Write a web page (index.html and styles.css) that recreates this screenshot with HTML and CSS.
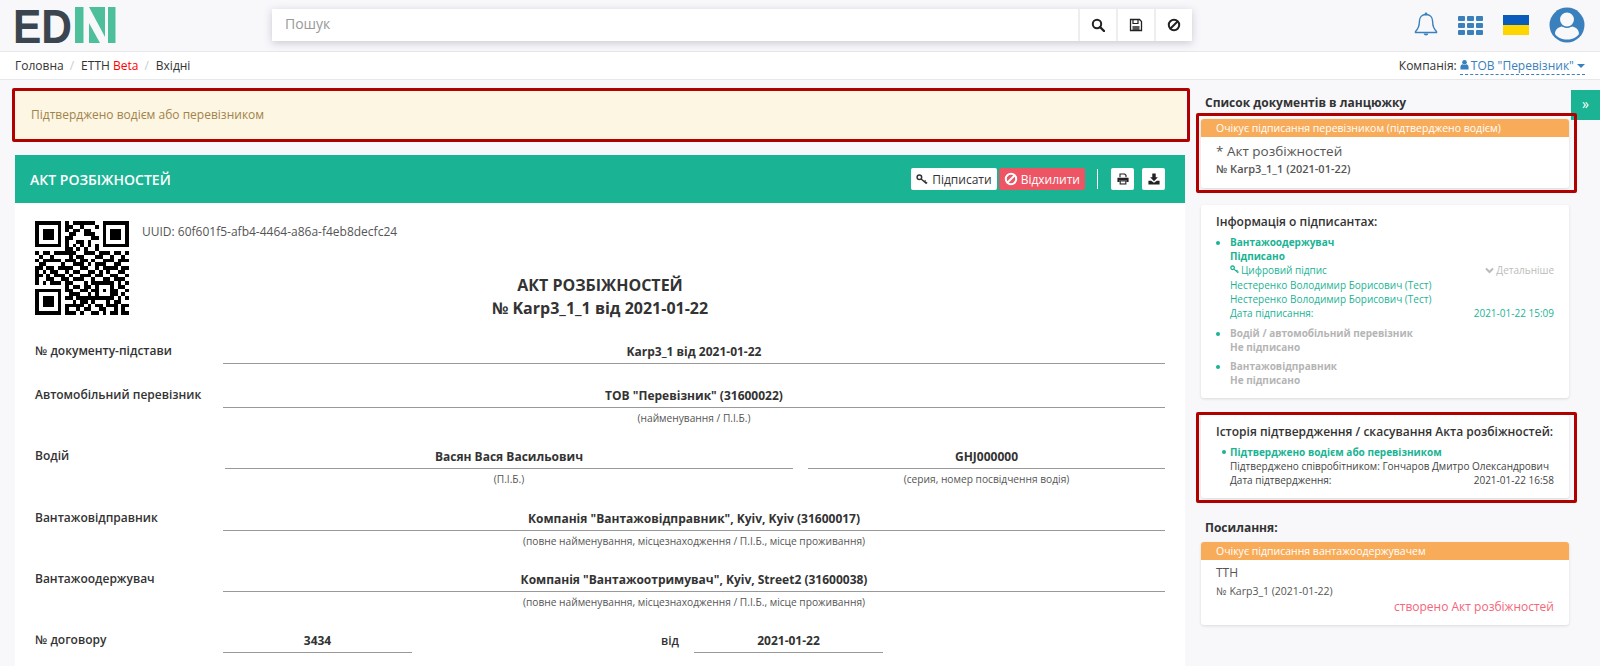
FILE: index.html
```html
<!DOCTYPE html>
<html lang="uk">
<head>
  <meta charset="UTF-8">
  <meta name="viewport" content="width=device-width, initial-scale=1.0">
  <title>EDIN - Акт розбіжностей</title>
  <link rel="stylesheet" href="styles.css">
</head>
<body>
  <!-- Top bar -->
  <header class="topbar">
    <div class="logo">
      <svg class="logo-svg" width="100" height="36" viewBox="0 0 100 36">
        <text class="logo-text" x="-3" y="36" textLength="59" lengthAdjust="spacingAndGlyphs">ED</text>
        <rect x="59" y="0" width="8.500" height="36" fill="#4dbf9b"/>
        <polygon points="73,0 89,0 89,30" fill="#4dbf9b"/>
        <polygon points="73,16 84,36 73,36" fill="#4dbf9b"/>
        <rect x="92" y="0" width="7.500" height="36" fill="#4dbf9b"/>
      </svg>
    </div>
    <div class="search">
      <div class="search-input">Пошук</div>
      <div class="search-btn">
        <svg width="14" height="14" viewBox="0 0 14 14"><circle cx="6" cy="6" r="4.200" fill="none" stroke="#222" stroke-width="2"/><path d="M9 9l4 4" stroke="#222" stroke-width="2.400" stroke-linecap="round"/></svg>
      </div>
      <div class="search-btn">
        <svg width="14" height="14" viewBox="0 0 14 14"><path d="M1.500 1.500h9l2 2v9h-11z" fill="none" stroke="#222" stroke-width="1.300"/><path d="M4 2v3.500h5V2" fill="none" stroke="#222" stroke-width="1.200"/><rect x="3.500" y="8" width="7" height="4.500" fill="#222" opacity="0.75"/></svg>
      </div>
      <div class="search-btn">
        <svg width="14" height="14" viewBox="0 0 14 14"><circle cx="7" cy="7" r="5.200" fill="none" stroke="#222" stroke-width="2"/><path d="M3.500 10.500l7-7" stroke="#222" stroke-width="2"/></svg>
      </div>
    </div>
    <div class="top-icons">
      <svg width="24" height="26" viewBox="0 0 24 26"><path d="M12 2.500c-4.200 0-6.600 3-6.600 6.800 0 5-1.100 7.600-3.900 10.200v1h21v-1c-2.800-2.600-3.900-5.200-3.900-10.200 0-3.800-2.400-6.800-6.600-6.800z" fill="none" stroke="#3a80bd" stroke-width="1.400"/><circle cx="12" cy="2" r="1.400" fill="#3a80bd"/><path d="M9.500 21.500a2.600 2.600 0 0 0 5 0z" fill="#3a80bd"/></svg>
      <div class="apps">
        <i></i><i></i><i></i><i></i><i></i><i></i><i></i><i></i><i></i>
      </div>
      <div class="flag"></div>
      <svg width="36" height="36" viewBox="0 0 36 36"><circle cx="18" cy="18" r="17.500" fill="#3a80bd"/><path d="M6 27c0-5 4-7 7-7.500 3 1.500 7 1.500 10 0 3 .5 7 2.500 7 7.500-3 4-7 5.500-12 5.500S9 31 6 27z" fill="#f8f8fb"/><circle cx="18" cy="12.500" r="7.700" fill="#f8f8fb" stroke="#3a80bd" stroke-width="1.500"/></svg>
    </div>
  </header>

  <!-- Breadcrumbs -->
  <nav class="crumbs">
    <div class="crumbs-list">
      <span>Головна</span><span class="sep">/</span><span>ЕТТН <b class="beta">Beta</b></span><span class="sep">/</span><span>Вхідні</span>
    </div>
    <div class="company">Компанія: <span class="company-link"><svg class="company-icon" width="9" height="11" viewBox="0 0 10 11"><circle cx="5" cy="3" r="2.600" fill="#3a80bd"/><path d="M0.500 11V8c0-1.600 1.500-2.700 2.500-2.700 1.200.8 2.800.8 4 0 1 0 2.500 1.100 2.500 2.700v3z" fill="#3a80bd"/></svg>ТОВ "Перевізник" <i class="caret"></i></span></div>
  </nav>

  <div class="side-toggle">»</div>

  <div class="content">
    <main class="main-col">
      <div class="alert marked">Підтверджено водієм або перевізником</div>

      <section class="panel">
        <div class="panel-head">
          <h1>АКТ РОЗБІЖНОСТЕЙ</h1>
          <div class="panel-actions">
            <button class="btn">
              <svg width="13" height="11" viewBox="0 0 14 12"><circle cx="3.600" cy="3.600" r="2.500" fill="none" stroke="#333" stroke-width="1.600"/><path d="M5.500 5.500l6 5M9 8.500l1.500-1.500M11 10l1-1" stroke="#333" stroke-width="1.500"/></svg>
              Підписати
            </button>
            <button class="btn btn-red">
              <svg width="14" height="14" viewBox="0 0 14 14"><circle cx="7" cy="7" r="5.200" fill="none" stroke="#fff" stroke-width="2"/><path d="M3.500 10.500l7-7" stroke="#fff" stroke-width="2"/></svg>
              Відхилити
            </button>
            <span class="divider"></span>
            <button class="btn btn-icon">
              <svg width="12" height="12" viewBox="0 0 14 14"><path d="M3.500 5V1.200h5.500l1.500 1.500V5" fill="none" stroke="#222" stroke-width="1.300"/><path d="M0.500 5.500h13v5h-2.500V8.500H3v2H0.500z" fill="#222"/><rect x="3.700" y="9.200" width="6.600" height="3.600" fill="none" stroke="#222" stroke-width="1.300"/></svg>
            </button>
            <button class="btn btn-icon">
              <svg width="12" height="12" viewBox="0 0 14 14"><path d="M5 0.500h4v4.500h2.500L7 9.500 2.500 5H5z" fill="#222"/><path d="M0.500 9h3.200L7 11.500 10.300 9h3.200v4.500H0.500z" fill="#222"/></svg>
            </button>
          </div>
        </div>

        <div class="panel-body">
          <div class="doc-top">
            <svg class="qr" id="qr" width="94" height="94" viewBox="0 0 25 25" shape-rendering="crispEdges"></svg>
            <span class="uuid">UUID: 60f601f5-afb4-4464-a86a-f4eb8decfc24</span>
          </div>

          <h2 class="doc-title">АКТ РОЗБІЖНОСТЕЙ<br>№ Karp3_1_1 від 2021-01-22</h2>

          <div class="row row-plain">
            <div class="label">№ документу-підстави</div>
            <div class="field"><div class="value">Karp3_1 від 2021-01-22</div></div>
          </div>

          <div class="row">
            <div class="label">Автомобільний перевізник</div>
            <div class="field">
              <div class="value">ТОВ "Перевізник" (31600022)</div>
              <div class="hint">(найменування / П.І.Б.)</div>
            </div>
          </div>

          <div class="row row-driver">
            <div class="label">Водій</div>
            <div class="field field-name">
              <div class="value">Васян Вася Васильович</div>
              <div class="hint">(П.І.Б.)</div>
            </div>
            <div class="field field-doc">
              <div class="value">GHJ000000</div>
              <div class="hint">(серия, номер посвідчення водія)</div>
            </div>
          </div>

          <div class="row">
            <div class="label">Вантажовідправник</div>
            <div class="field">
              <div class="value">Компанія "Вантажовідправник", Kyiv, Kyiv (31600017)</div>
              <div class="hint">(повне найменування, місцезнаходження / П.І.Б., місце проживання)</div>
            </div>
          </div>

          <div class="row">
            <div class="label">Вантажоодержувач</div>
            <div class="field">
              <div class="value">Компанія "Вантажоотримувач", Kyiv, Street2 (31600038)</div>
              <div class="hint">(повне найменування, місцезнаходження / П.І.Б., місце проживання)</div>
            </div>
          </div>

          <div class="row">
            <div class="label">№ договору</div>
            <div class="field field-short"><div class="value">3434</div></div>
            <div class="from">від</div>
            <div class="field field-short"><div class="value">2021-01-22</div></div>
          </div>
        </div>
      </section>
    </main>

    <aside class="side-col">
      <h3 class="side-title">Список документів в ланцюжку</h3>

      <div class="card marked">
        <div class="card-status">Очікує підписання перевізником (підтверджено водієм)</div>
        <div class="card-doc">
          <div class="doc-name">* Акт розбіжностей</div>
          <div class="doc-no">№ Karp3_1_1 (2021-01-22)</div>
        </div>
      </div>

      <div class="card info-card">
        <h4>Інформація о підписантах:</h4>
        <ul class="signers">
          <li class="signed">
            <b>Вантажоодержувач</b>
            <b>Підписано</b>
            <div class="line line-key">
              <span><svg class="key-icon" width="10" height="9" viewBox="0 0 14 12"><circle cx="3.600" cy="3.600" r="2.500" fill="none" stroke="#1ab394" stroke-width="1.800"/><path d="M5.500 5.500l6 5M9 8.500l1.500-1.500M11 10l1-1" stroke="#1ab394" stroke-width="1.600"/></svg>Цифровий підпис</span>
              <span class="more"><svg width="9" height="7" viewBox="0 0 9 7"><path d="M1 1.500l3.500 3.500L8 1.500" fill="none" stroke="#bbb" stroke-width="2"/></svg> Детальніше</span>
            </div>
            <div>Нестеренко Володимир Борисович (Тест)</div>
            <div>Нестеренко Володимир Борисович (Тест)</div>
            <div class="line"><span>Дата підписання:</span><span>2021-01-22 15:09</span></div>
          </li>
          <li class="unsigned"><b>Водій / автомобільний перевізник</b><b>Не підписано</b></li>
          <li class="unsigned"><b>Вантажовідправник</b><b>Не підписано</b></li>
        </ul>
      </div>

      <div class="card history-card marked">
        <h4>Історія підтвердження / скасування Акта розбіжностей:</h4>
        <ul class="history">
          <li>
            <b>Підтверджено водієм або перевізником</b>
            <div>Підтверджено співробітником: Гончаров Дмитро Олександрович</div>
            <div class="line"><span>Дата підтвердження:</span><span>2021-01-22 16:58</span></div>
          </li>
        </ul>
      </div>

      <h3 class="side-title links-title">Посилання:</h3>

      <div class="card">
        <div class="card-status">Очікує підписання вантажоодержувачем</div>
        <div class="card-doc card-doc-link">
          <div class="doc-name doc-name-plain">ТТН</div>
          <div class="doc-no doc-no-plain">№ Karp3_1 (2021-01-22)</div>
          <div class="created">створено Акт розбіжностей</div>
        </div>
      </div>
    </aside>
  </div>

  <script src="qr.js"></script>
</body>
</html>
```

FILE: styles.css
```css
* {
  box-sizing: border-box;
}

body {
  margin: 0;
  height: 666px;
  overflow: hidden;
  font-family: "Open Sans", "Noto Sans", sans-serif;
  font-size: 12px;
  color: #333;
  background-color: #f8f8fb;
}

/* Top bar */
.topbar {
  display: flex;
  align-items: center;
  height: 52px;
  padding-bottom: 1px;
  border-bottom: 1px solid #e7e7ea;
}

.logo {
  display: flex;
  align-items: center;
  width: 272px;
  padding-left: 16px;
}

.logo-svg {
  overflow: visible;
}

.logo-text {
  font-family: "Liberation Sans", sans-serif;
  font-size: 48px;
  font-weight: 700;
  fill: #3a4550;
}

.search {
  display: flex;
  width: 920px;
  height: 32px;
  background-color: #fff;
  box-shadow: 0 2px 8px rgba(60, 60, 90, 0.25);
}

.search-input {
  flex: 1;
  padding-left: 13px;
  font-size: 14px;
  line-height: 30px;
  color: #999;
}

.search-btn {
  display: flex;
  align-items: center;
  justify-content: center;
  width: 38px;
  border-left: 2px solid #eee;
}

.top-icons {
  display: flex;
  align-items: center;
  margin-left: 222px;
  gap: 20px;
}

.apps {
  display: grid;
  grid-template-columns: repeat(3, 7px);
  grid-auto-rows: 5px;
  gap: 2px;
}

.apps i {
  background-color: #3a80bd;
  border-radius: 1px;
}

.flag {
  width: 26px;
  height: 20px;
  background: linear-gradient(#0a5bbb 50%, #ffd500 50%);
}

/* Breadcrumbs */
.crumbs {
  display: flex;
  align-items: center;
  justify-content: space-between;
  height: 28px;
  padding: 0 15px;
  background-color: #fff;
  border-bottom: 1px solid #e7e7ea;
}

.sep {
  margin: 0 7px 0 6px;
  color: #ccc;
}

.beta {
  font-weight: 400;
  color: #f00;
}

.company-link {
  color: #3a80bd;
  border-bottom: 1px dashed #3a80bd;
}

.company-icon {
  margin-right: 2px;
}

.caret {
  display: inline-block;
  vertical-align: 2px;
  border-top: 4px solid #3a80bd;
  border-left: 4px solid transparent;
  border-right: 4px solid transparent;
}

.side-toggle {
  position: absolute;
  top: 90px;
  right: 0;
  width: 29px;
  height: 30px;
  font-size: 14px;
  line-height: 28px;
  text-align: center;
  color: #fff;
  background-color: #1ab394;
}

/* Columns */
.content {
  display: flex;
  padding-left: 15px;
}

.main-col {
  width: 1170px;
  padding-top: 11px;
}

.side-col {
  width: 368px;
  margin-left: 16px;
  padding-top: 14px;
}

/* Red annotation frames */
.marked {
  position: relative;
}

.marked::after {
  content: "";
  position: absolute;
  top: -6px;
  right: -8px;
  bottom: -5px;
  left: -5px;
  border: 3px solid #b00000;
  border-radius: 2px;
}

.alert {
  height: 48px;
  padding-left: 16px;
  font-size: 12px;
  line-height: 48px;
  color: #a0834a;
  background-color: #fdf6e3;
}

.alert.marked::after {
  top: -3px;
  right: -5px;
  bottom: -3px;
  left: -3px;
}

.history-card.marked::after {
  top: -3px;
}

/* Document panel */
.panel {
  margin-top: 16px;
  background-color: #fff;
}

.panel-head {
  display: flex;
  align-items: center;
  justify-content: space-between;
  height: 48px;
  padding: 0 20px 0 15px;
  background-color: #1ab394;
}

.panel-head h1 {
  margin: 0;
  font-size: 14px;
  font-weight: 600;
  color: #fff;
}

.panel-actions {
  display: flex;
  align-items: center;
  gap: 3px;
}

.btn {
  display: flex;
  align-items: center;
  gap: 3px;
  height: 22px;
  padding: 0 5px;
  font-family: inherit;
  font-size: 12px;
  color: #333;
  background-color: #fff;
  border: 0;
  border-radius: 2px;
}

.btn-red {
  margin-left: -1px;
  color: #fff;
  background-color: #ed5565;
}

.btn-icon {
  justify-content: center;
  width: 23px;
  padding: 0;
}

.btn-icon:last-child {
  margin-left: 5px;
}

.divider {
  width: 1px;
  height: 20px;
  margin: 0 10px 0 9px;
  background-color: #fff;
}

.panel-body {
  padding: 18px 20px 0;
  height: 470px;
}

.doc-top {
  display: flex;
  height: 94px;
}

.uuid {
  margin: 2px 0 0 13px;
  color: #555;
}

.doc-title {
  margin: -41px 0 21px;
  font-size: 16px;
  line-height: 23px;
  font-weight: 700;
  text-align: center;
  color: #333;
}

/* Form rows */
.row {
  display: flex;
  margin-bottom: 18px;
}

.row-plain {
  margin-bottom: 21px;
}

.row-driver {
  margin-bottom: 19px;
}

.label {
  flex: none;
  width: 188px;
  font-weight: 600;
  line-height: 20px;
  color: #333;
}

.field {
  flex: 1;
  text-align: center;
}

.value {
  height: 23px;
  font-weight: 700;
  line-height: 22px;
  border-bottom: 1px solid #999;
}

.hint {
  height: 20px;
  font-size: 10.2px;
  line-height: 20px;
  color: #555;
}

.row-driver .label {
  width: 190px;
}

.field-name {
  flex: none;
  width: 568px;
}

.field-doc {
  margin-left: 15px;
}

.field-short {
  flex: none;
  width: 189px;
}

.from {
  width: 282px;
  padding-left: 249px;
  font-weight: 600;
  line-height: 22px;
}

/* Side cards */
.side-title {
  margin: 0 0 7px 4px;
  font-size: 12px;
  font-weight: 700;
  line-height: 18px;
  color: #333;
}

.links-title {
  margin: 21px 0 5px 4px;
}

.card {
  margin-bottom: 17px;
  background-color: #fff;
  border-radius: 3px;
  box-shadow: 0 1px 3px rgba(0, 0, 0, 0.12);
}

.card-status {
  height: 18px;
  padding-left: 15px;
  font-size: 10.5px;
  line-height: 18px;
  color: #fff;
  background-color: #f8ac59;
  border-radius: 3px 3px 0 0;
}

.card-doc {
  height: 51px;
  padding: 4px 15px 0;
}

.card-doc-link {
  height: 65px;
  padding-top: 3px;
}

.doc-name {
  font-size: 13.5px;
  font-weight: 500;
  line-height: 20px;
  color: #555;
}

.doc-name-plain {
  font-size: 12px;
  font-weight: 400;
}

.doc-no {
  font-size: 11px;
  line-height: 16px;
  font-weight: 600;
  color: #555;
}

.doc-no-plain {
  font-size: 10.5px;
  font-weight: 400;
}

.created {
  font-size: 12px;
  line-height: 16px;
  text-align: right;
  color: #f4667a;
}

.info-card,
.history-card {
  padding: 8px 15px 0;
  font-size: 10px;
  line-height: 14px;
}

.info-card {
  height: 193px;
}

.history-card {
  height: 83px;
}

.info-card h4,
.history-card h4 {
  margin: 0 0 4px;
  font-size: 12px;
  font-weight: 600;
  line-height: 18px;
  color: #333;
}

ul.signers,
ul.history {
  margin: 0;
  padding: 0 0 0 14px;
  color: #1ab394;
}

ul.signers li {
  margin-bottom: 5px;
}

ul.signers li.signed {
  margin-bottom: 6px;
}

.line-key {
  height: 15px;
  line-height: 15px;
}

.key-icon {
  margin-right: 1px;
}

li b {
  display: block;
}

.signers .unsigned {
  color: #b5b5b5;
}

.signers .unsigned::marker {
  color: #1ab394;
}

ul.history {
  list-style: none;
}

.history li {
  position: relative;
}

.history li::before {
  content: "";
  position: absolute;
  top: 5px;
  left: -8px;
  width: 4px;
  height: 4px;
  border-radius: 50%;
  background-color: #1ab394;
}

.history li div {
  color: #444;
}

.line {
  display: flex;
  justify-content: space-between;
}

.more {
  color: #bbb;
}
```

FILE: qr.js
```js
// QR modules, one string per row
var rows = [
  "1111111010111111001111111",
  "1000001011001000101000001",
  "1011101010110110001011101",
  "1011101001100111001011101",
  "1011101011000001101011101",
  "1000001010011010001000001",
  "1111111010101010101111111",
  "0000000011010100100000000",
  "1011011111100111011101101",
  "0100100001011000110010010",
  "1011111011101101001110111",
  "0110000100111010111001100",
  "1101101111001100101111011",
  "1010110010110011010100110",
  "1101011101001110110011001",
  "1001100110111001001101110",
  "1010111011000101111110101",
  "0000000010110110100010110",
  "1111111011001101101011001",
  "1000001001110010100011010",
  "1011101011011111111110101",
  "1011101000101101000101100",
  "1011101011111010110111011",
  "1000001010010110011001010",
  "1111111011101001101011011"
];

var d = "";
rows.forEach(function (row, y) {
  for (var x = 0; x < row.length; x++) {
    if (row[x] === "1") d += "M" + x + " " + y + "h1v1h-1z";
  }
});

var path = document.createElementNS("http://www.w3.org/2000/svg", "path");
path.setAttribute("d", d);
document.getElementById("qr").appendChild(path);
```
